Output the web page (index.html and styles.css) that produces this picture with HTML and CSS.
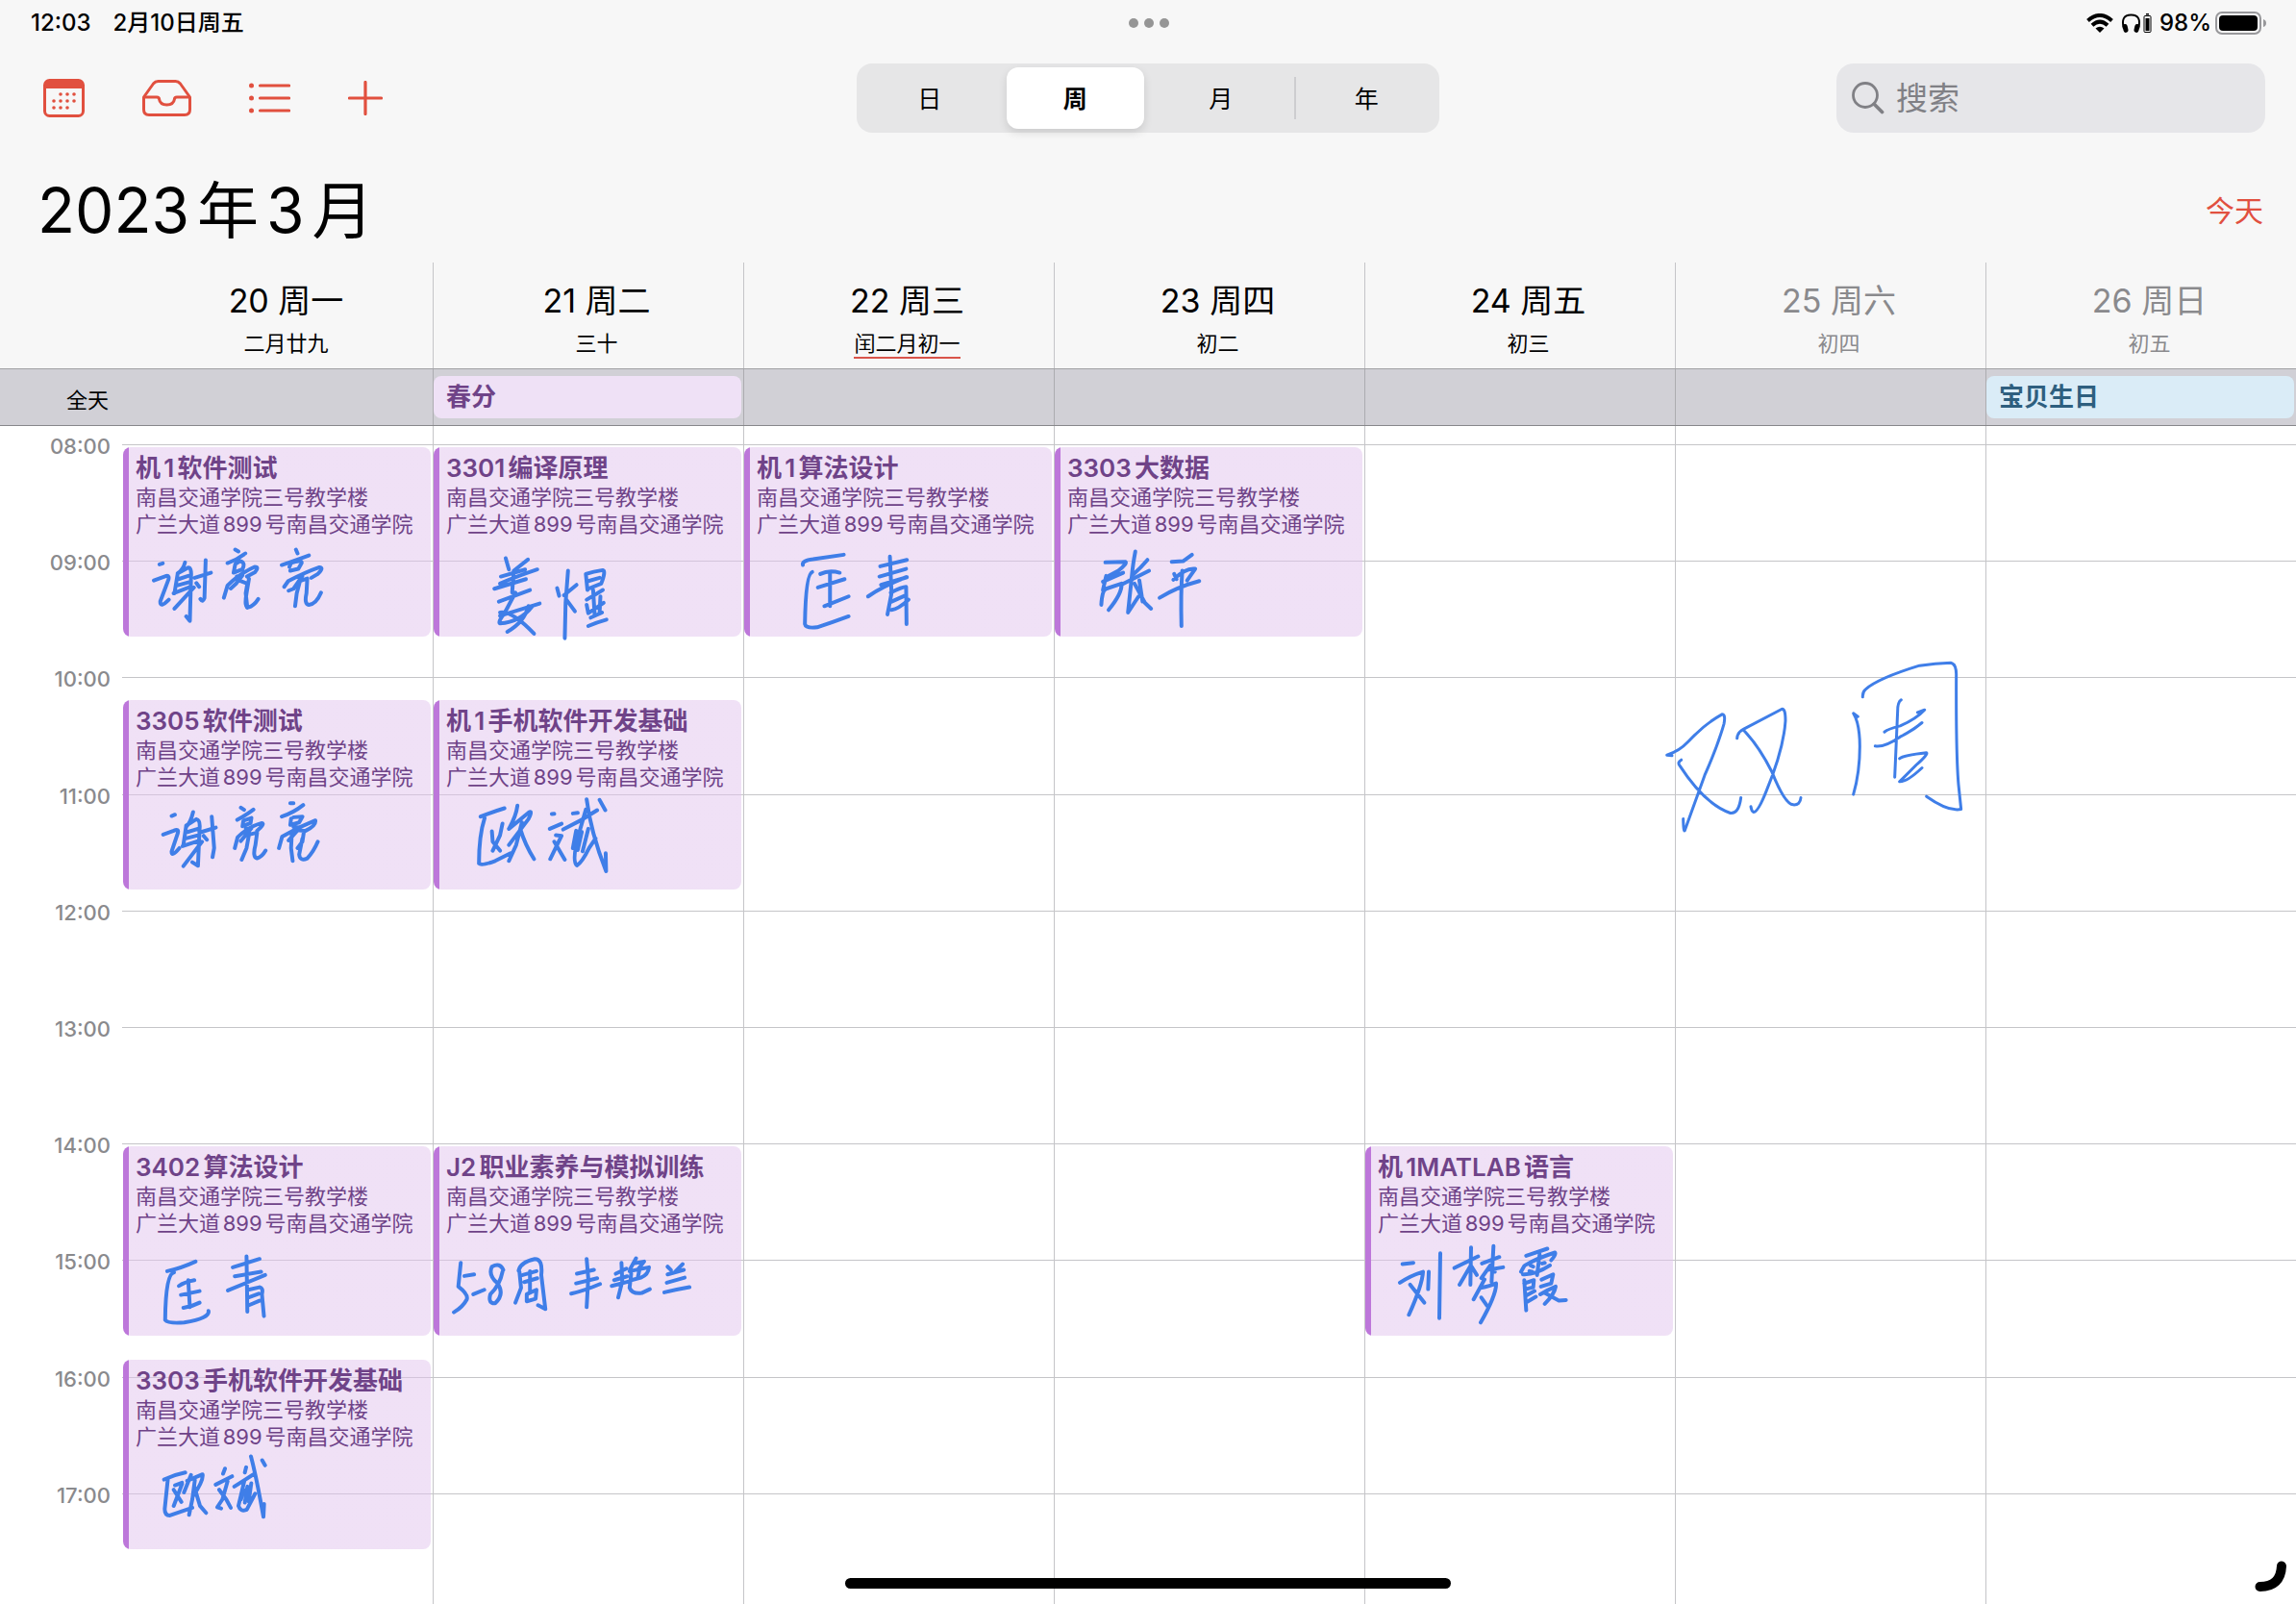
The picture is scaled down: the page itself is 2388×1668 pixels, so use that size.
FILE: index.html
```html
<!DOCTYPE html>
<html lang="zh-CN">
<head>
<meta charset="utf-8">
<meta name="viewport" content="width=device-width, initial-scale=1">
<title>日历 2023年3月</title>
<link rel="stylesheet" href="styles.css">
</head>
<body>
<div class="app">
  <div class="status">
    <div class="status-left"><span>12:03</span><span>2月10日周五</span></div>
    <div class="status-dots"><i></i><i></i><i></i></div>
    <div class="status-right">
      <svg class="wifi" width="28" height="20" viewBox="0 0 28 20" aria-hidden="true"><g fill="none" stroke="#000" stroke-width="4"><path d="M1.5 7.5Q14 -3.5 26.500 7.500"/><path d="M6 12.300Q14 5 22 12.300"/></g><path d="M14 20L9.500 15.600Q14 12 18.500 15.600Z"/></svg>
      <svg class="headphones" width="32" height="20" viewBox="0 0 32 20" aria-hidden="true"><path d="M3 16Q-1 1.500 10.500 1.500T18 16" fill="none" stroke="#000" stroke-width="2"/><rect x="2" y="11" width="5" height="9" rx="2.500" transform="rotate(-12 4 15)"/><rect x="14" y="11" width="5" height="9" rx="2.500" transform="rotate(12 17 15)"/><rect x="24" y="2.500" width="7" height="17" rx="1" fill="none" stroke="#000"/><rect x="25.500" y="5" width="4" height="13"/><rect x="26" y="0" width="3" height="1.500"/></svg>
      <span>98%</span>
      <svg class="battery" width="54" height="24" viewBox="0 0 54 24" aria-hidden="true"><rect x="1" y="1" width="46" height="22" rx="6" fill="none" stroke="#98989b" stroke-width="2"/><rect x="4" y="4" width="40" height="16" rx="4"/><path d="M50 8Q53 9 53 12T50 16Z" fill="#98989b"/></svg>
    </div>
  </div>

  <header class="toolbar">
    <div class="tools">
      <button type="button" aria-label="日历"><svg width="43" height="40" viewBox="0 0 43 40"><rect x="1.500" y="1.500" width="40" height="37" rx="5" fill="none" stroke="currentColor" stroke-width="3"/><path d="M1 10V6Q1 1 6 1H37Q42 1 42 6V10Z" fill="currentColor"/><g fill="currentColor"><circle cx="18" cy="16" r="1.800"/><circle cx="25" cy="16" r="1.800"/><circle cx="32" cy="16" r="1.800"/><circle cx="11" cy="23" r="1.800"/><circle cx="18" cy="23" r="1.800"/><circle cx="25" cy="23" r="1.800"/><circle cx="32" cy="23" r="1.800"/><circle cx="11" cy="30" r="1.800"/><circle cx="18" cy="30" r="1.800"/><circle cx="25" cy="30" r="1.800"/></g></svg></button>
      <button type="button" aria-label="收件箱"><svg width="51" height="38" viewBox="0 0 51 38"><g fill="none" stroke="currentColor" stroke-width="3" stroke-linejoin="round"><path d="M1.500 18L11.500 4Q13.500 1.500 16.500 1.500H34.500Q37.500 1.500 39.500 4L49.500 18V31Q49.500 36.500 44 36.500H7Q1.500 36.500 1.500 31Z"/><path d="M1.500 18H15Q17.500 18 17.500 20Q18.500 26 25.500 26T33.500 20Q33.500 18 36 18H49.500"/></g></svg></button>
      <button type="button" aria-label="列表"><svg width="43" height="32" viewBox="0 0 43 32"><g fill="currentColor"><circle cx="2.500" cy="3" r="2.500"/><circle cx="2.500" cy="16" r="2.500"/><circle cx="2.500" cy="29" r="2.500"/></g><path d="M11.500 3H41.500M11.500 16H41.500M11.500 29H41.500" stroke="currentColor" stroke-width="3.200" stroke-linecap="round"/></svg></button>
      <button type="button" aria-label="新建日程"><svg width="36" height="36" viewBox="0 0 36 36"><path d="M18 1.500V34.500M1.500 18H34.500" stroke="currentColor" stroke-width="3.200" stroke-linecap="round"/></svg></button>
    </div>
    <nav class="segments" aria-label="视图">
      <button type="button">日</button>
      <button type="button" class="selected" aria-pressed="true">周</button>
      <button type="button">月</button>
      <button type="button" class="divided">年</button>
    </nav>
    <label class="search">
      <svg width="34" height="34" viewBox="0 0 34 34" aria-hidden="true"><g fill="none" stroke="currentColor" stroke-linecap="round"><circle cx="14" cy="14" r="12.500" stroke-width="2.800"/><path d="M23.500 23.500L31.500 31.500" stroke-width="3.800"/></g></svg>
      <input type="search" placeholder="搜索" aria-label="搜索">
    </label>
  </header>

  <div class="heading">
    <h1>2023年3月</h1>
    <a class="today" href="#today">今天</a>
  </div>

  <div class="days">
    <div class="day-head"><h2>20 周一</h2><p>二月廿九</p></div>
    <div class="day-head"><h2>21 周二</h2><p>三十</p></div>
    <div class="day-head"><h2>22 周三</h2><p class="month-start">闰二月初一</p></div>
    <div class="day-head"><h2>23 周四</h2><p>初二</p></div>
    <div class="day-head"><h2>24 周五</h2><p>初三</p></div>
    <div class="day-head weekend"><h2>25 周六</h2><p>初四</p></div>
    <div class="day-head weekend"><h2>26 周日</h2><p>初五</p></div>
  </div>

  <div class="allday">
    <div class="allday-label">全天</div>
    <div class="allday-cell"></div>
    <div class="allday-cell"><div class="pill">春分</div></div>
    <div class="allday-cell"></div>
    <div class="allday-cell"></div>
    <div class="allday-cell"></div>
    <div class="allday-cell"></div>
    <div class="allday-cell"><div class="pill birthday">宝贝生日</div></div>
  </div>

  <main class="week">
    <ol class="hours">
      <li><time>08:00</time></li><li><time>09:00</time></li><li><time>10:00</time></li><li><time>11:00</time></li><li><time>12:00</time></li><li><time>13:00</time></li><li><time>14:00</time></li><li><time>15:00</time></li><li><time>16:00</time></li><li><time>17:00</time></li>
    </ol>
    <div class="columns">
      <section class="column">
        <article class="event at-0800">
          <h3>机1软件测试</h3><p>南昌交通学院三号教学楼</p><p>广兰大道899号南昌交通学院</p>
          <svg class="ink" viewBox="19 45 760 590" preserveAspectRatio="none" role="img" aria-label="谢亮亮"><path d="M109 410L117 407M95 460L126 446Q134 444 131 458L111 525Q110 548 132 520M172 404Q168 425 154 438M154 438L146 500M154 438L180 420Q188 420 187 445L184 586L175 572M156 456L180 446M152 476L180 466M144 500L186 480M146 548L194 482M196 452L236 436M223 397L220 515Q216 530 210 518M200 468L207 480M296 364L304 370M277 406Q300 396 321 376M296 410L292 436L314 425Q322 404 308 400L297 408M268 514L277 476Q305 440 344 418Q356 418 345 434L325 448M300 448L314 444L298 470L285 485M301 458L326 470L322 500L326 545M330 455L324 500Q318 545 328 544Q342 540 353 518M446 364L450 376M411 412Q450 395 478 382M430 418L434 405Q462 395 460 406L452 424L432 430M417 480L427 462Q470 434 504 419Q516 420 500 440L484 452M446 450L462 446L440 486L428 492M456 462L448 500L444 540M456 462L474 454L472 500Q466 534 478 536Q496 534 508 498"/></svg>
        </article>
        <article class="event at-1010">
          <h3>3305软件测试</h3><p>南昌交通学院三号教学楼</p><p>广兰大道899号南昌交通学院</p>
          <svg class="ink" viewBox="19 39 760 590" preserveAspectRatio="none" role="img" aria-label="谢亮亮"><path d="M139 400L147 396M118 458L144 446Q158 438 154 454L139 510Q138 530 158 500M192 388Q186 420 175 434M175 430L168 490M175 430L200 410Q210 412 208 440L204 555L190 544M178 450L204 440M174 470L204 460M166 494L204 478M168 556L214 480M212 450L248 436M238 402L244 500L240 528M218 462L226 474M310 374L318 381M301 412Q322 398 341 380M316 416L314 432L334 422L336 406L318 414M295 500L302 466Q330 432 362 422Q370 424 350 446M322 440L336 438L310 478M330 458L324 500L312 536M330 458L350 452L346 490Q338 528 350 532Q362 528 371 508M432 360L440 360M411 402Q440 390 464 366M434 408L432 428L454 420L462 402L440 404M404 500L412 464Q450 436 494 414Q496 430 470 446M440 434L456 436L428 476M436 450L434 500L438 540M450 444L466 446L462 480L450 500M462 470L454 520Q456 542 474 532Q490 510 500 480"/></svg>
        </article>
        <article class="event at-1400">
          <h3>3402算法设计</h3><p>南昌交通学院三号教学楼</p><p>广兰大道899号南昌交通学院</p>
          <svg class="ink" viewBox="19 39 760 590" preserveAspectRatio="none" role="img" aria-label="匡青"><path d="M128 428Q160 420 198 398M145 432Q124 434 123 580Q130 592 170 588Q234 574 230 552M157 474Q170 462 195 456M180 456L184 540M162 502L208 490M168 542Q190 538 208 526M290 416L356 390M295 444L360 430M278 488L370 440M324 382L326 554M328 486L356 478Q366 480 362 500L367 568M328 510L354 498M330 534L356 520"/></svg>
        </article>
        <article class="event at-1550">
          <h3>3303手机软件开发基础</h3><p>南昌交通学院三号教学楼</p><p>广兰大道899号南昌交通学院</p>
          <svg class="ink" viewBox="384 45 960 590" preserveAspectRatio="none" role="img" aria-label="欧斌"><path d="M512 418Q546 402 578 396M524 414L514 510Q514 530 530 530L600 506M546 436L568 428M568 432L542 500M542 450L566 488M596 404L574 458M584 422L632 402Q636 420 602 470M608 420L600 480L590 528M606 440L624 500L643 522M702 384L696 400M673 434L724 408M710 424L694 480L678 504L690 508M684 450L706 480L720 506M768 380L764 396M731 440L794 400M762 424L744 500Q750 520 770 512L796 462M760 450L752 480M772 440L764 490M784 430L776 486M783 346Q800 410 822 534L824 494M818 358L827 374"/></svg>
        </article>
      </section>
      <section class="column">
        <article class="event at-0800">
          <h3>3301编译原理</h3><p>南昌交通学院三号教学楼</p><p>广兰大道899号南昌交通学院</p>
          <svg class="ink" viewBox="786 45 760 590" preserveAspectRatio="none" role="img" aria-label="姜煜"><path d="M964 391L972 426M1019 395L984 430M952 448L1012 426M950 470Q990 448 1042 426M936 486L1014 456M984 430L980 498M947 526L1024 490M988 498L962 560Q944 590 950 594Q1000 590 1030 540M950 560Q980 554 1034 626M950 570L1048 532M1020 540Q1010 590 968 620M1091 484L1096 508M1139 474L1108 506M1118 430L1112 530L1110 640M1114 520L1135 556M1162 440Q1180 432 1204 428Q1212 430 1200 470L1168 486M1162 440L1166 490M1168 462L1196 452M1164 520L1204 490M1180 490L1184 570M1164 536L1168 562L1206 530M1198 510L1196 560M1174 576L1202 560M1168 602Q1190 590 1213 582"/></svg>
        </article>
        <article class="event at-1010">
          <h3>机1手机软件开发基础</h3><p>南昌交通学院三号教学楼</p><p>广兰大道899号南昌交通学院</p>
          <svg class="ink" viewBox="786 39 760 590" preserveAspectRatio="none" role="img" aria-label="欧斌"><path d="M902 402Q930 388 961 376M912 406Q898 460 898 548Q904 556 938 540L976 516M930 448L932 480L950 508M956 424L950 460L932 508M993 368Q990 400 972 440M972 440L1020 390Q1032 380 1020 410L972 490M1004 420L990 490L972 540M1000 440Q1012 490 1034 534M1078 394L1084 393M1073 440L1102 424M1088 460L1102 462L1074 534M1084 480L1110 536M1130 392L1142 390M1106 442Q1150 416 1190 382M1162 380L1146 450Q1126 540 1140 554Q1152 546 1170 500L1186 470M1138 446L1130 500M1152 450L1142 506M1168 440L1154 510M1164 348Q1174 450 1212 572L1211 516M1196 350L1210 382"/></svg>
        </article>
        <article class="event at-1400">
          <h3>J2职业素养与模拟训练</h3><p>南昌交通学院三号教学楼</p><p>广兰大道899号南昌交通学院</p>
          <svg class="ink" viewBox="786 39 760 590" preserveAspectRatio="none" role="img" aria-label="5-8周 丰艳兰"><path d="M853 402L847 476Q872 500 868 516Q858 540 836 556M862 443L886 438M884 500L911 486M958 424Q950 400 930 414Q920 440 944 466Q962 500 938 528Q920 530 926 500Q950 470 956 430M996 426Q1000 400 1036 390Q1056 390 1052 440L1062 546L1044 534M998 430L1002 480L988 526M1006 440L1040 428M1010 462L1042 450M1024 428L1024 490M1016 500L1040 486L1038 514L1016 522ZM1140 436L1182 424M1138 466L1190 450M1126 498Q1160 488 1197 468M1164 390L1168 450L1164 540M1236 436L1262 420M1232 456L1264 444M1226 474L1268 460M1250 402L1252 460L1242 510M1286 388L1272 420M1280 404L1306 398L1290 424M1270 428L1318 416Q1316 440 1298 448L1274 456M1294 426L1290 450M1274 436L1270 480Q1276 500 1300 496L1320 484M1364 414L1372 424M1401 406L1384 428M1364 438L1404 424M1362 464L1406 448M1356 494Q1390 484 1418 478"/></svg>
        </article>
      </section>
      <section class="column">
        <article class="event at-0800">
          <h3>机1算法设计</h3><p>南昌交通学院三号教学楼</p><p>广兰大道899号南昌交通学院</p>
          <svg class="ink" viewBox="10 45 760 590" preserveAspectRatio="none" role="img" aria-label="匡青"><path d="M155 412Q152 398 180 394L256 380M178 434Q162 440 160 596Q162 610 190 606Q230 590 268 572M198 440Q220 426 246 436M192 482L258 456M222 440L222 540M208 540L268 510M346 416L412 396M344 448L410 424M348 474L412 450M316 510Q350 480 410 450M370 386L374 500L364 566M372 498Q400 480 410 480L411 596M374 526L406 508M374 552Q390 550 416 520"/></svg>
        </article>
      </section>
      <section class="column">
        <article class="event at-0800">
          <h3>3303大数据</h3><p>南昌交通学院三号教学楼</p><p>广兰大道899号南昌交通学院</p>
          <svg class="ink" viewBox="777 45 760 590" preserveAspectRatio="none" role="img" aria-label="张平"><path d="M902 404L952 402Q956 408 934 430L904 450M904 446L896 490M896 464L946 436M892 536Q894 490 904 486L942 470Q944 500 910 552M944 472L1010 430M976 370Q970 410 968 440L958 560L984 510M1006 396Q990 420 972 440M974 470L1000 530L1015 548M986 460L994 526M1066 402L1094 400L1116 380M1072 440L1078 456M1124 424L1104 460M1070 458Q1100 420 1124 424M1036 514Q1080 480 1134 462M1092 430Q1088 500 1090 602"/></svg>
        </article>
      </section>
      <section class="column">
        <article class="event at-1400">
          <h3>机1MATLAB语言</h3><p>南昌交通学院三号教学楼</p><p>广兰大道899号南昌交通学院</p>
          <svg class="ink" viewBox="60 39 960 590" preserveAspectRatio="none" role="img" aria-label="刘梦霞"><path d="M176 406L210 402M168 464Q200 442 240 430Q238 470 196 564M200 470L244 526M258 430L256 484M294 372L291 574M338 418L412 382M390 354L388 470M388 412L354 470M392 414L408 440M424 404L478 384M460 350L454 462M442 424L490 416M450 410L422 450M460 420L464 430M432 454L398 516M420 480Q450 474 468 466Q470 500 420 588M422 510L440 536M562 380L628 358M556 412L546 430M558 410Q600 386 652 370Q656 376 640 394M604 376L596 440M576 410L584 414M572 428L580 430M612 404L620 402M610 424L618 420M552 438Q590 440 636 410M556 456L562 550M556 466L586 456L584 478L560 484M562 504L588 490M564 524L592 508M610 454L646 438L640 466L608 476M606 500Q630 486 654 476Q650 500 620 530M620 496L664 520L686 518"/></svg>
        </article>
      </section>
      <section class="column">
        <svg class="note" viewBox="100 80 930 545" role="img" aria-label="双周"><path d="M118 379L102 377Q140 366 170 334Q220 280 274 250Q286 250 280 280Q260 350 220 440L158 612Q154 620 153 576M147 392Q134 400 142 410Q220 530 300 558Q326 562 333 510M321 325Q322 306 342 296L460 234Q472 230 472 270Q466 360 412 490Q386 556 372 555Q366 552 364 538M342 300Q390 350 430 430Q470 530 496 532Q518 534 520 510M713 196Q712 180 722 172Q760 138 890 98Q940 90 988 89Q1004 92 1005 124Q1004 380 1012 470L1020 546Q980 554 912 506M698 257L684 247Q704 280 704 350Q704 430 684 500M833 205Q822 212 822 240L813 446M781 305Q790 296 830 286Q880 264 906 236L884 244M752 349Q780 354 830 320Q870 300 898 276M828 388Q840 378 912 370Q918 374 880 408L828 460Q850 462 898 417"/></svg>
      </section>
      <section class="column"></section>
    </div>
  </main>
  <div class="home-bar"></div>
  <svg class="corner" width="34" height="34" viewBox="0 0 34 34" aria-hidden="true"><path d="M5.500 27Q27 27 28 5.500" fill="none" stroke="#000" stroke-width="10" stroke-linecap="round"/></svg>
</div>
</body>
</html>
```

FILE: styles.css
```css
:root {
  --red: #e1503f;
  --gutter: 127px;
  --line: #c5c5c8;
  --purple: #6f4388;
  --hours-height: 1212px;
}

* { box-sizing: border-box; }

body {
  margin: 0;
  background: #fff;
  color: #000;
  font-family: Inter, "Noto Sans CJK SC", sans-serif;
  text-autospace: normal;
}

h1, h2, h3, p, ol { margin: 0; padding: 0; font-weight: 400; }
ol { list-style: none; }
button, input { font: inherit; color: inherit; border: 0; padding: 0; background: none; }
svg { display: block; flex: none; }

.app {
  position: relative;
  display: flex;
  flex-direction: column;
  height: 100vh;
  overflow: hidden;
  background: #f7f7f7;
}

/* status bar */
.status {
  display: grid;
  grid-template-columns: 1fr auto 1fr;
  align-items: center;
  height: 48px;
  padding: 0 30px 0 32px;
  font-size: 24px;
  font-weight: 500;
  line-height: 32px;
  text-autospace: no-autospace;
}
.status-left { display: flex; align-items: baseline; gap: 23px; }
.status-dots { display: flex; gap: 6px; }
.status-dots i { width: 10px; height: 10px; border-radius: 50%; background: #959595; }
.status-right { display: flex; justify-content: flex-end; align-items: center; gap: 8px; }
.battery { margin-left: -4px; }

/* toolbar */
.toolbar {
  display: grid;
  grid-template-columns: 1fr 606px 1fr;
  align-items: center;
  height: 72px;
  margin-top: 18px;
  padding: 0 32px;
}
.tools { display: flex; align-items: center; gap: 60px; padding-left: 13px; color: var(--red); }
.segments {
  display: grid;
  grid-template-columns: repeat(4, 1fr);
  height: 72px;
  padding: 4px 0;
  border-radius: 16px;
  background: #e6e6e7;
  font-size: 25px;
}
.segments button { padding-bottom: 2px; }
.segments .selected {
  margin: 0 4px;
  border-radius: 12px;
  background: #fff;
  font-weight: 700;
  box-shadow: 0 4px 10px rgba(0, 0, 0, .12);
}
.segments .divided {
  background: linear-gradient(#cdcdd0, #cdcdd0) left center / 2px 44px no-repeat;
}
.search {
  justify-self: end;
  display: flex;
  align-items: center;
  gap: 12px;
  width: 446px;
  height: 72px;
  padding: 0 16px;
  border-radius: 18px;
  background: #e6e6e9;
  color: #808085;
}
.search input { flex: 1; min-width: 0; height: 48px; font-size: 33px; outline: 0; }
.search input::placeholder { color: #808085; opacity: 1; }

.heading {
  display: flex;
  align-items: center;
  justify-content: space-between;
  height: 135px;
  padding: 27px 34px 0 39px;
}
.heading h1 { font-size: 64px; line-height: 80px; }
.today { color: var(--red); font-size: 30px; line-height: 40px; text-decoration: none; }

/* day headings */
.days, .allday {
  display: grid;
  grid-template-columns: repeat(7, 1fr);
  padding-left: var(--gutter);
}
.day-head {
  height: 110px;
  padding: 20px 0 0 17px;
  border-left: 1px solid var(--line);
  text-align: center;
}
.day-head:first-child { border-color: transparent; }
.day-head h2 { font-size: 34px; line-height: 40px; }
.day-head p { margin-top: 10px; font-size: 22px; line-height: 28px; }
.day-head .month-start { display: inline-block; border-bottom: 2px solid #d9544a; }
.weekend { color: #8a8a8d; }

/* all-day strip */
.allday {
  grid-template-columns: var(--gutter) repeat(7, 1fr);
  height: 60px;
  padding-left: 0;
  border-top: 1px solid #a2a2a6;
  border-bottom: 1px solid #87878b;
  background: #d1d0d6;
}
.allday-label { padding: 16px 14px 0 0; text-align: right; font-size: 22px; line-height: 32px; }
.allday-cell { padding: 7px 2px 7px 0; border-left: 1px solid #acacb0; }
.allday-label + .allday-cell { border-color: transparent; }
.pill {
  height: 44px;
  padding-left: 13px;
  border-radius: 8px;
  background: #efe1f6;
  color: var(--purple);
  font-size: 26px;
  font-weight: 600;
  line-height: 44px;
}
.birthday { background: #daecf7; color: #2e5f7f; }

/* week grid */
.week {
  display: grid;
  flex: 1;
  min-height: 0;
  overflow: hidden;
  background: #fff;
}
.hours, .columns { grid-area: 1 / 1; }
.hours {
  display: grid;
  grid-template-rows: repeat(10, 1fr);
  height: var(--hours-height);
  margin-top: 19px;
}
.hours li { display: grid; grid-template-columns: var(--gutter) 1fr; align-items: start; }
.hours li::after { content: ""; border-top: 1px solid var(--line); }
.hours time {
  margin-top: -11px;
  padding-right: 12px;
  color: #8a8a8d;
  font-size: 22px;
  font-weight: 500;
  line-height: 26px;
  text-align: right;
}
.columns {
  display: grid;
  grid-template-columns: repeat(7, 1fr);
  padding-left: var(--gutter);
}
.column {
  position: relative;
  display: grid;
  grid-template-rows: repeat(60, 1fr);
  height: calc(var(--hours-height) + 19px);
  padding-top: 19px;
  border-left: 1px solid var(--line);
}
.column:first-child { border-color: transparent; }

/* each grid row is ten minutes */
.event {
  position: relative;
  min-height: 0;
  margin: 3px 2px 2px 0;
  padding: 6px 0 0 13px;
  border-radius: 8px;
  background: linear-gradient(90deg, #bd77da 6px, rgba(225, 195, 237, .5) 6px);
  color: var(--purple);
  white-space: nowrap;
}
.at-0800 { grid-row: 1 / span 10; }
.at-1010 { grid-row: 14 / span 10; }
.at-1400 { grid-row: 37 / span 10; }
.at-1550 { grid-row: 48 / span 10; }
.event h3 { font-size: 26px; font-weight: 600; line-height: 32px; }
.event p { font-size: 22px; line-height: 28px; }

/* pen strokes */
.ink, .note { position: absolute; overflow: visible; pointer-events: none; }
.ink { inset: 0; width: 320px; height: 100%; }
.note { left: -10px; top: 243px; width: 310px; height: 182px; }
.ink path, .note path {
  fill: none;
  stroke: #3f7ee8;
  stroke-width: 4px;
  stroke-linecap: round;
  stroke-linejoin: round;
  vector-effect: non-scaling-stroke;
}
.note path { stroke-width: 3px; }

.home-bar {
  position: absolute;
  left: 50%;
  bottom: 16px;
  width: 630px;
  height: 11px;
  margin-left: -315px;
  border-radius: 6px;
  background: #000;
}
.corner { position: absolute; right: 9px; bottom: 11px; }
```
